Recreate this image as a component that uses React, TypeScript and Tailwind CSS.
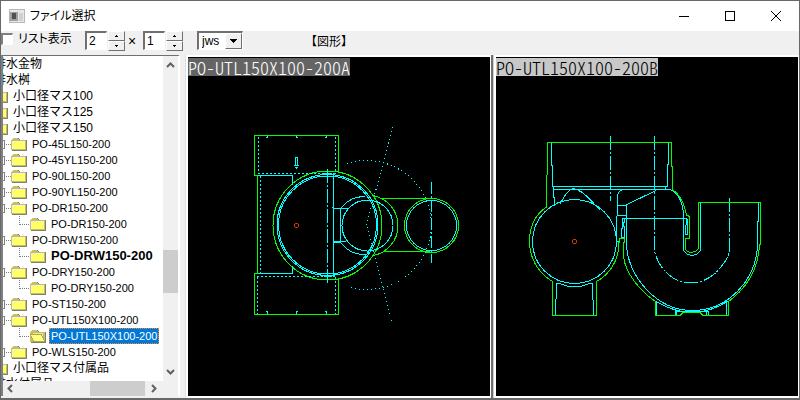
import React, { useState } from "react";

type Row = { label: string; level: 0 | 1 | 2 | 3; bold?: boolean; selected?: boolean };

const rows: Row[] = [
  { label: "排水金物", level: 0 },
  { label: "排水桝", level: 0 },
  { label: "小口径マス100", level: 1 },
  { label: "小口径マス125", level: 1 },
  { label: "小口径マス150", level: 1 },
  { label: "PO-45L150-200", level: 2 },
  { label: "PO-45YL150-200", level: 2 },
  { label: "PO-90L150-200", level: 2 },
  { label: "PO-90YL150-200", level: 2 },
  { label: "PO-DR150-200", level: 2 },
  { label: "PO-DR150-200", level: 3 },
  { label: "PO-DRW150-200", level: 2 },
  { label: "PO-DRW150-200", level: 3, bold: true },
  { label: "PO-DRY150-200", level: 2 },
  { label: "PO-DRY150-200", level: 3 },
  { label: "PO-ST150-200", level: 2 },
  { label: "PO-UTL150X100-200", level: 2 },
  { label: "PO-UTL150X100-200", level: 3, selected: true },
  { label: "PO-WLS150-200", level: 2 },
  { label: "小口径マス付属品", level: 1 },
  { label: "排水付属品", level: 0 },
];

function Folder({ open }: { open?: boolean }) {
  return (
    <svg width="16" height="16" viewBox="0 0 16 16" shapeRendering="crispEdges" className="shrink-0">
      <path d="M1 4h1V3h1V2h5v1h1v1h7v11H1z" fill="#808070" />
      <path d="M0 4h1V3h1V2h5v1h1v1h7v10H0z" fill="#c8c060" />
      {open ? (
        <>
          <path d="M3 5h10v6H3z" fill="#e8e8a0" />
          <path d="M0.500 6.500h11l3 7H3.500z" fill="#ffff80" stroke="#b0a850" strokeWidth="1" />
        </>
      ) : (
        <>
          <path d="M1 5h13v8H1z" fill="#ffff66" />
          <path d="M1 5h13v1H1zM1 5h1v8H1z" fill="#f0f0e8" />
        </>
      )}
    </svg>
  );
}

function Connector({ level }: { level: number }) {
  return (
    <svg width="11" height="16" viewBox="0 0 11 16" shapeRendering="crispEdges" className="shrink-0" fill="none" stroke="#808080">
      {level === 3 ? (
        <path d="M0.500 0V9M1 8.500H11" strokeDasharray="1 1" />
      ) : (
        <>
          <path d="M0 4.500H4.500V12.500H0" />
          <path d="M6 8.500H11" strokeDasharray="1 1" />
        </>
      )}
    </svg>
  );
}

function TreeRow({ row }: { row: Row }) {
  const indent = ["pl-[11px]", "pl-3.5", "pl-[22px]", "pl-[41px]"][row.level];
  const size = row.bold ? "text-[13px] font-bold" : row.level > 1 ? "text-[11px]" : "text-xs";
  return (
    <li role="treeitem" aria-selected={!!row.selected} className={`flex h-4 items-center whitespace-nowrap ${indent}`}>
      {row.level > 1 && <Connector level={row.level} />}
      {row.level > 0 && <Folder open={row.selected} />}
      <span
        className={`ml-[3px] h-4 px-0.5 leading-4 ${size} ${
          row.selected ? "bg-[#0078d7] text-white outline-1 -outline-offset-1 outline-dotted outline-[#ff8728]" : ""
        }`}
      >
        {row.label}
      </span>
    </li>
  );
}

function Chevron({ d }: { d: string }) {
  return (
    <svg width="15" height="15" viewBox="0 0 15 15" fill="none" stroke="#606060" strokeWidth="2">
      <path d={d} />
    </svg>
  );
}

function Spinner({ label, initial }: { label: string; initial: number }) {
  const [value, setValue] = useState(initial);
  const btn =
    "flex h-2.5 w-[17px] items-center justify-center border border-t-white border-l-white border-r-[#707070] border-b-[#707070] bg-[#f0f0f0]";
  return (
    <div className="flex items-start gap-px">
      <input
        aria-label={label}
        value={value}
        onChange={(e) => setValue(Number(e.target.value) || 0)}
        className="h-[19px] w-[22px] border-t-2 border-l-2 border-r border-b border-t-[#707070] border-l-[#707070] border-r-white border-b-white bg-white pl-0.5 text-xs leading-4 outline-none"
      />
      <div className="flex flex-col">
        <button aria-label={`${label} +`} className={btn} onClick={() => setValue(value + 1)}>
          <svg width="5" height="3" viewBox="0 0 5 3" shapeRendering="crispEdges"><path d="M2 0h1v1h1v1H1V1h1z" /></svg>
        </button>
        <button aria-label={`${label} -`} className={btn} onClick={() => setValue(value - 1)}>
          <svg width="5" height="3" viewBox="0 0 5 3" shapeRendering="crispEdges"><path d="M1 0h3v1H3v1H2V1H1z" /></svg>
        </button>
      </div>
    </div>
  );
}

function DrawingA() {
  return (
    <svg viewBox="188 57 302 339" preserveAspectRatio="xMinYMin meet" className="block h-full w-full" fill="none" stroke="#00ffff" shapeRendering="crispEdges">
      <g stroke="#00ff00">
        <path d="M338.500 172V135.500H254.500V175.500H257.500V273.500H254.500V314.500H338.500V279" />
        <circle cx="327.500" cy="225.500" r="54.500" />
        <path d="M373 195.600A30.500 30.500 0 0 1 373 255.600" />
        <path d="M380 198.500H430M383 251.500H430" />
        <circle cx="431.500" cy="225.500" r="27" />
      </g>
      <path d="M258.500 137V173M335.500 137V173M258 173.500H336M257.500 277V314M335.500 277V314M257 276.500H336M260.500 176V273" strokeDasharray="2 2" />
      <path d="M258 175.500H292.500V185M258 273.500H292.500V266" />
      <path d="M266 137.500h2M267.500 136v2M296 136v2M296 137.500h2M325 137.500h2M326.500 136v2M266 311.500h2M267.500 311v3M296 311.500h2M296.500 311v3M325 311.500h2M326.500 311v3" />
      <path d="M295.500 166V157.500H297.500V166M294 165.500h5M295 167.500h3M296.500 168v1" />
      <circle cx="327.500" cy="225" r="50.500" />
      <circle cx="327.500" cy="225" r="49" />
      <path d="M327.500 169V283" strokeDasharray="14 2 2 2" />
      <path d="M324 173.500h8M324 276.500h8M333.500 173V277M332 207.500h2M333 208.500H348M340.500 208V242M333 241.500H346M333 242.500h8" />
      <circle cx="367.500" cy="225.500" r="25.500" />
      <path d="M341 208A30 30 0 0 1 365 196.500M341 243A30 30 0 0 0 366 254.500" />
      <circle cx="431.500" cy="225.500" r="25" />
      <path d="M431.500 182V263" strokeDasharray="12 2 2 2" />
      <g strokeDasharray="1 3">
        <path d="M347.500 163.500A64.500 64.500 0 1 1 350.500 287.500" />
        <path d="M392.500 127L366.500 225.500L392.500 323" />
      </g>
      <circle cx="296.500" cy="225.500" r="2" stroke="#d83000" />
    </svg>
  );
}

function DrawingB() {
  return (
    <svg viewBox="496 57 302 339" preserveAspectRatio="xMinYMin meet" className="block h-full w-full" fill="none" stroke="#00ffff" shapeRendering="crispEdges">
      <path d="M551.500 143V165L552.500 166V186L553.500 187V197L554.500 198V206M668.500 143V164L667.500 165V187M665.500 187v3M553 186.500H668M553 189.500H670" />
      <path d="M610.500 136V201" strokeDasharray="14 2 2 2" />
      <path d="M654.500 136V250C656 259 660 267 669 275C679 283 685 282.500 693 282.500C704 282 713 277 720 268C727 260 729.500 255 729.500 245V196" strokeDasharray="14 2 2 2" />
      <circle cx="574.500" cy="241.500" r="42" />
      <path d="M560 204C563 199 566 191 573 188.500C583 190 590 200 600 210" />
      <path d="M556.500 283.500L555.500 315M592.500 283.500L593.500 315M556 283.500H560L568 286.500H581L589 283.500H593" />
      <path d="M624 189.500C620 190 617.500 193 617.500 197V215.500L616.500 217V241.500H620M617 205.500H626.500V244M617 215.500H626M626 205L656 190.500" />
      <path d="M670 189.500C678 192 683.500 203 683.500 216V250C687 257 697 257 700.500 250V203" />
      <path d="M622 218.500H686.500V224L685.500 226V234H687.500V219M622.500 218V228L621.500 229V237H624.500V226H623.500V222H624.500V219" />
      <path d="M626.500 244C627 275 656 310.500 692 310.500C728 310.500 757 280 757.500 244V222L758.500 221V203" />
      <path d="M655 301C667 308 681 312.500 692 312.500C703 312.500 717 308 728 301" />
      <path d="M656.500 302V315M726.500 302V315M675.500 310V315M676.500 310V315M675 311.500H708.500V315M706.500 311V315" />
      <g stroke="#00ff00">
        <path d="M547.500 175V142.500H671.500V166L672.500 167V189.500C682 197 684 204 686.500 215L689.500 216.500V238.500H685.500V249C688 253.500 696 253.500 698.500 248V202.500H760.500V244L759.500 245C758 272 744 290 728.500 301.500V315.500H703L700 312.500H683L680 315.500H655.500V301.500C640 291 626 274 623.500 257V243L624.500 242V238.500H619.500V242L618.500 243V250C616 264 608 275 596.500 281.500V315.500H552.500V281.500C538 273 529.500 258 529.500 241.500C529.500 227 535 215 546.500 207V175" />
      </g>
      <circle cx="574.500" cy="241.500" r="2" stroke="#d83000" />
    </svg>
  );
}

export default function App() {
  const captionBtn = "flex h-[30px] w-[46px] items-center justify-center";
  const caption =
    "absolute top-px h-[18px] whitespace-nowrap font-['Noto_Sans_CJK_JP',sans-serif] text-[18px] leading-[18px] font-light [font-feature-settings:'hwid']";
  return (
    <div className="flex h-screen flex-col overflow-hidden border-t border-r border-b-2 border-l border-[#686868] bg-[#f0f0f0] font-['Liberation_Sans','Noto_Sans_CJK_JP',sans-serif] text-xs text-black">
      <header className="flex h-[30px] shrink-0 items-center bg-white">
        <svg width="16" height="14" viewBox="0 0 16 14" className="ml-2" shapeRendering="crispEdges">
          <path d="M0 0h16v14H0z" fill="#b8b8b8" />
          <path d="M1 1h14v12H1z" fill="#e8e8e8" />
          <path d="M1 3h8v9H1z" fill="#a0a0a0" />
          <path d="M3 4h4v6H3z" fill="#505050" />
          <path d="M10 4h4v8h-4z" fill="#d0d0d0" />
        </svg>
        <h1 className="ml-[5px] text-xs leading-5 [font-feature-settings:'palt']">ファイル選択</h1>
        <div className="ml-auto flex">
          <button aria-label="最小化" className={captionBtn}>
            <svg width="10" height="10" stroke="#000" shapeRendering="crispEdges"><path d="M0 5.500H10" /></svg>
          </button>
          <button aria-label="最大化" className={captionBtn}>
            <svg width="10" height="10" stroke="#000" fill="none" shapeRendering="crispEdges"><path d="M.5.500h9v9h-9z" /></svg>
          </button>
          <button aria-label="閉じる" className={captionBtn}>
            <svg width="10" height="10" stroke="#000"><path d="M0 0L10 10M10 0L0 10" /></svg>
          </button>
        </div>
      </header>

      <div className="flex h-[23px] shrink-0 items-start">
        <label className="flex w-[84px] items-center gap-[5px] whitespace-nowrap leading-4 [font-feature-settings:'palt']">
          <input
            type="checkbox"
            className="size-3 appearance-none border-t-2 border-l-2 border-r border-b border-t-[#808080] border-l-[#808080] border-r-white border-b-white bg-white checked:bg-[#404040]"
          />
          リスト表示
        </label>
        <Spinner label="列" initial={2} />
        <span className="w-[18px] pr-1 text-center text-sm leading-5">×</span>
        <Spinner label="行" initial={1} />
        <div className="relative ml-3.5">
          <select
            aria-label="ファイル種別"
            className="block h-[19px] w-[46px] appearance-none border-t-2 border-l-2 border-r border-b border-t-[#707070] border-l-[#707070] border-r-white border-b-white bg-white pl-[3px] text-xs leading-4 outline-none"
          >
            <option>jws</option>
            <option>jwk</option>
          </select>
          <span className="pointer-events-none absolute top-0.5 right-px flex h-4 w-[17px] items-center justify-center border border-t-white border-l-white border-r-[#707070] border-b-[#707070] bg-[#f0f0f0]">
            <svg width="7" height="4" shapeRendering="crispEdges"><path d="M0 0h7v1H6v1H5v1H4v1H3V3H2V2H1V1H0z" /></svg>
          </span>
        </div>
        <span className="ml-[68px] pt-[3px] leading-4 [font-feature-settings:'halt']">【図形】</span>
      </div>

      <main className="flex min-h-0 flex-1 pt-px">
        <section className="mb-0.5 flex w-[179px] shrink-0 flex-col border-t border-r-2 border-l-2 border-t-[#707070] border-r-white border-l-[#808080]">
          <div className="flex min-h-0 flex-1">
            <ul role="tree" aria-label="フォルダ" className="w-40 overflow-hidden bg-white">
              <div className="-ml-[25px]">
                {rows.map((r, i) => (
                  <TreeRow key={i} row={r} />
                ))}
              </div>
            </ul>
            <div className="flex w-[15px] flex-col">
              <div className="pt-0.5"><Chevron d="M4 9L7.500 5.500L11 9" /></div>
              <div className="flex-[176]" />
              <div className="h-[43px] bg-[#cdcdcd]" />
              <div className="flex-[70]" />
              <div className="pb-0.5"><Chevron d="M4 6L7.500 9.500L11 6" /></div>
            </div>
          </div>
          <div className="flex h-[15px] shrink-0 items-center pr-[17px]">
            <Chevron d="M9 4L5.500 7.500L9 11" />
            <div className="flex-[72]" />
            <div className="h-[15px] w-[55px] bg-[#cdcdcd]" />
            <div className="flex-[1]" />
            <Chevron d="M6 4L9.500 7.500L6 11" />
          </div>
        </section>
        <div className="w-1.5 shrink-0 border-r border-r-[#e0e0e0]" />
        <figure className="relative min-w-0 flex-1 border-2 border-r border-white bg-black">
          <DrawingA />
          <figcaption className={`${caption} left-0 bg-[#646464] text-white`}>PO-UTL150X100-200A</figcaption>
        </figure>
        <div className="w-[3px] shrink-0 border-r border-r-[#d0d0d0] bg-[#707070]" />
        <figure className="relative min-w-0 flex-1 border-2 border-r border-white bg-black">
          <DrawingB />
          <figcaption className={`${caption} left-0 bg-[#c8c8c8] text-black`}>PO-UTL150X100-200B</figcaption>
        </figure>
      </main>
    </div>
  );
}
